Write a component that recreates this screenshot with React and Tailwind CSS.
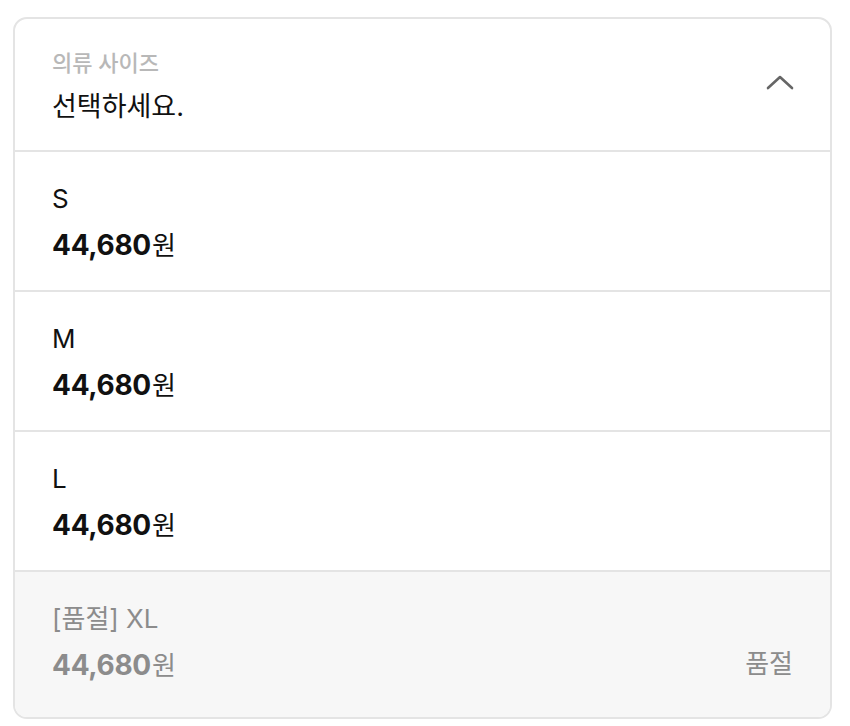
import React from 'react';

const FONT = { fontFamily: 'Inter, "Noto Sans CJK KR", sans-serif' };

const options = [
  { name: 'S', price: '44,680', soldOut: false },
  { name: 'M', price: '44,680', soldOut: false },
  { name: 'L', price: '44,680', soldOut: false },
  { name: '[품절] XL', price: '44,680', soldOut: true },
];

const ChevronUp = () => (
  <svg width="28" height="16" viewBox="0 0 28 16" fill="none">
    <path d="M2 14 L14 3 L26 14" stroke="#666" strokeWidth="2.6" strokeLinecap="round" strokeLinejoin="round" />
  </svg>
);

const OptionRow = ({ opt, last }) => (
  <div
    className={`flex items-end justify-between pl-[37px] pr-[37px] ${
      opt.soldOut ? 'bg-[#f7f7f7] pt-[27px] pb-[31px]' : 'bg-white pt-[27px] pb-[24px]'
    } ${last ? '' : 'border-b-2 border-[#e4e4e4]'}`}
  >
    <div className="flex flex-col gap-[6px]">
      <div className={`text-[26px] leading-[40px] ${opt.soldOut ? 'text-[#8c8c8c]' : 'text-[#111]'}`}>
        {opt.name}
      </div>
      <div className={`flex items-baseline leading-[40px] ${opt.soldOut ? 'text-[#8c8c8c]' : 'text-[#111]'}`}>
        <span className="text-[28px] font-bold tracking-[-0.3px]">{opt.price}</span>
        <span className="text-[26px] ml-[1px]">원</span>
      </div>
    </div>
    {opt.soldOut && <div className="text-[26px] leading-[40px] text-[#8c8c8c] mb-[2px]">품절</div>}
  </div>
);

export default function App() {
  return (
    <div className="w-[850px] h-[726px] bg-white pt-[17px] pl-[13px]" style={FONT}>
      <div className="w-[819px] border-2 border-[#e4e4e4] rounded-[14px] overflow-hidden">
        <div className="flex items-center justify-between pl-[37px] pr-[36px] pt-[30px] pb-[25px] border-b-2 border-[#e4e4e4]">
          <div className="flex flex-col gap-[12px]">
            <div className="text-[22px] leading-[28px] font-medium text-[#b8b8b8]">의류 사이즈</div>
            <div className="text-[27px] leading-[36px] text-[#111]">선택하세요.</div>
          </div>
          <div className="mb-[10px]">
            <ChevronUp />
          </div>
        </div>
        {options.map((opt, i) => (
          <OptionRow key={opt.name} opt={opt} last={i === options.length - 1} />
        ))}
      </div>
    </div>
  );
}
